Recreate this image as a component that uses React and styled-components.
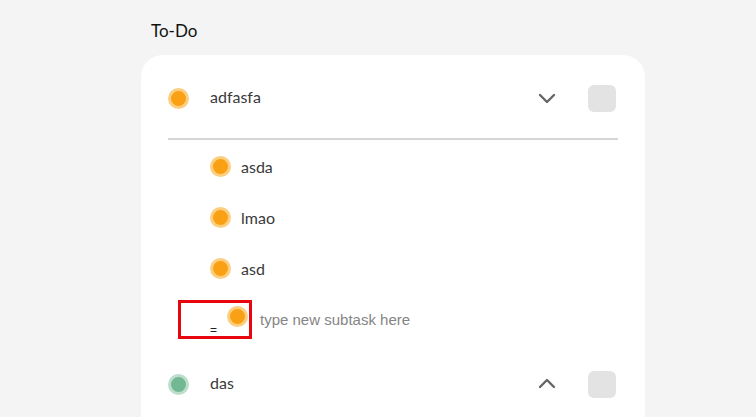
import React from 'react'
import styled, { createGlobalStyle } from 'styled-components'

const GlobalStyle = createGlobalStyle`
  html, body {
    margin: 0;
    padding: 0;
    background-color: #f4f4f4;
    font-family: Lato, "Open Sans", sans-serif;
    overflow: hidden;
  }
`

const Page = styled.div`
  padding: 20px 0 0 141px;
  height: 417px;
  box-sizing: border-box;
  overflow: hidden;
`

const Heading = styled.h2`
  margin: 0 0 13px 10px;
  font-size: 17px;
  font-weight: 400;
  color: #111;
  line-height: 22px;
`

const Card = styled.div`
  width: 504px;
  background-color: #fff;
  border-radius: 22px 22px 0 0;
  padding: 29px 29px 19px 27px;
  box-sizing: border-box;
  display: flex;
  flex-direction: column;
`

const TaskRow = styled.div`
  display: flex;
  align-items: center;
  height: 28px;
`

const Dot = styled.span`
  width: 15px;
  height: 15px;
  border-radius: 50%;
  flex-shrink: 0;
  background-color: ${p => p.$color};
  border: 3.5px solid ${p => p.$ring};
`

const TaskName = styled.span`
  margin-left: 21px;
  margin-top: -3px;
  font-size: 16px;
  color: #3a3a3a;
  flex: 1;
`

const Chevron = styled.svg`
  width: 18px;
  height: 18px;
  margin-right: 32px;
`

const Check = styled.span`
  width: 28px;
  height: 27px;
  border-radius: 6px;
  background-color: #e3e3e3;
`

const Divider = styled.div`
  height: 2px;
  background-color: #d6d6d6;
  margin: 26px -2px 15px 0;
`

const SubList = styled.div`
  display: flex;
  flex-direction: column;
  gap: 29px;
  padding-left: 42px;
`

const SubRow = styled.div`
  display: flex;
  align-items: center;
  height: 22px;
`

const SubName = styled.span`
  margin-left: 10px;
  font-size: 16px;
  color: #3a3a3a;
`

const NewRow = styled.div`
  display: flex;
  align-items: center;
  margin: 21px 0 31px 10px;
`

const Handle = styled.div`
  width: 74px;
  height: 39px;
  box-sizing: border-box;
  border: 3px solid #e8050d;
  display: flex;
  align-items: flex-start;
  justify-content: flex-end;
  padding: 3px 1px 0 0;
  position: relative;
`

const Grip = styled.span`
  position: absolute;
  left: 29px;
  bottom: 0;
  font-family: "Liberation Sans", Arial, sans-serif;
  font-size: 12px;
  color: #222;
  line-height: 12px;
`

const NewInput = styled.span`
  margin-left: 8px;
  font-family: "Liberation Sans", Arial, sans-serif;
  font-size: 15px;
  color: #858585;
`

const orange = { $color: '#f9a015', $ring: '#fccf80' }
const green = { $color: '#72b893', $ring: '#bcdecb' }

function Arrow({ up }) {
  return (
    <Chevron viewBox="0 0 18 18">
      <polyline
        points={up ? '2,12 9,5 16,12' : '2,6 9,13 16,6'}
        fill="none"
        stroke="#666"
        strokeWidth="2.4"
        strokeLinecap="round"
        strokeLinejoin="round"
      />
    </Chevron>
  )
}

export default function App() {
  const subtasks = ['asda', 'lmao', 'asd']
  return (
    <Page>
      <GlobalStyle />
      <Heading>To-Do</Heading>
      <Card>
        <TaskRow>
          <Dot {...orange} />
          <TaskName>adfasfa</TaskName>
          <Arrow />
          <Check />
        </TaskRow>
        <Divider />
        <SubList>
          {subtasks.map(s => (
            <SubRow key={s}>
              <Dot {...orange} />
              <SubName>{s}</SubName>
            </SubRow>
          ))}
        </SubList>
        <NewRow>
          <Handle>
            <Grip>=</Grip>
            <Dot {...orange} />
          </Handle>
          <NewInput>type new subtask here</NewInput>
        </NewRow>
        <TaskRow>
          <Dot {...green} />
          <TaskName>das</TaskName>
          <Arrow up />
          <Check />
        </TaskRow>
      </Card>
    </Page>
  )
}
